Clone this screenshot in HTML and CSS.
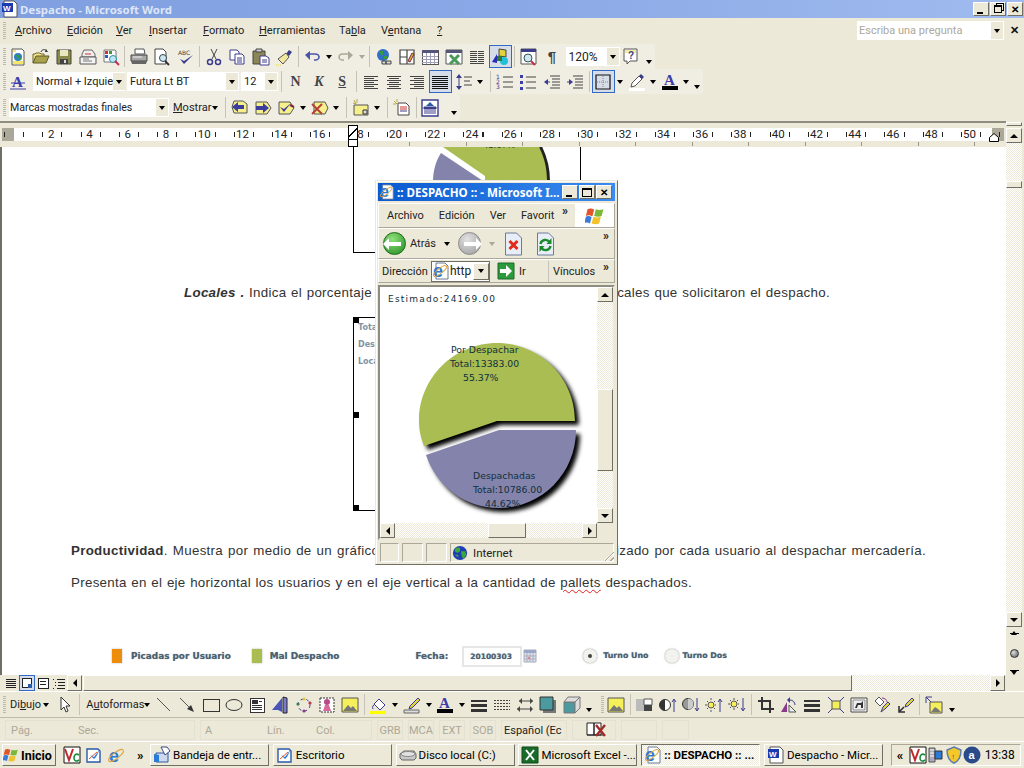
FILE: index.html
```html
<!DOCTYPE html>
<html lang="es">

<head>
    <meta charset="UTF-8">
    <title>Despacho - Microsoft Word</title>
    <link rel="stylesheet" href="styles.css">
</head>

<body>
    <svg class="defs" xmlns="http://www.w3.org/2000/svg">
        <symbol id="new" viewBox="0 0 18 18"><path d="M3 1h10l2 2v14H3z" fill="#fff" stroke="#555"/><path d="M4 2h3v2H4zM4 13h10v3H4z" fill="#f2e96a"/><circle cx="9" cy="9" r="4" fill="#2f7fc4"/><path d="M7 7h3v3H8zM10 10h2v2h-2z" fill="#3a9a3a"/></symbol>
        <symbol id="open" viewBox="0 0 18 18"><path d="M1 15V6h2l1-1h4l1 1h3v2" fill="#f4e48c" stroke="#6b6630"/><path d="M1 15l3-7h13l-3 7z" fill="#a8a24e" stroke="#5c5826"/><path d="M9 4c1-3 4-3 6-1" fill="none" stroke="#333"/><path d="M14 1l2 3h-3z" fill="#333"/></symbol>
        <symbol id="save" viewBox="0 0 18 18"><path d="M2 2h14v14H2z" fill="#8a8a4a" stroke="#444"/><path d="M5 2h8v6H5z" fill="#e9e7c2"/><path d="M5 11h8v5H5z" fill="#444"/><path d="M9 12h2v3H9z" fill="#ddd"/></symbol>
        <symbol id="mail" viewBox="0 0 18 18"><path d="M5 2h8l3 4v3H3V6z" fill="#eee" stroke="#666"/><path d="M6 6h6" stroke="#c33"/><path d="M1 9h16v7H1z" fill="#f3f3f3" stroke="#555"/><path d="M4 11h6M4 13h9" stroke="#777"/></symbol>
        <symbol id="perm" viewBox="0 0 18 18"><path d="M2 2h11l1 1v11H2z" fill="#fff" stroke="#777"/><path d="M3 3h3v3H3z" fill="#c33"/><path d="M7 3h3v3H7z" fill="#3a9a3a"/><path d="M3 7h3v3H3z" fill="#2f5fc4"/><circle cx="11" cy="11" r="3.5" fill="#bfe6f5" stroke="#2f8fa0"/><path d="M13 13l4 4" stroke="#c0304a" stroke-width="2"/></symbol>
        <symbol id="print" viewBox="0 0 18 18"><path d="M5 1h9l1 5H5z" fill="#fff" stroke="#555"/><path d="M1 7h16v6H1z" fill="#a8a8a8" stroke="#444"/><path d="M1 13h16l-1 3H2z" fill="#666"/><path d="M3 9h9" stroke="#eee"/></symbol>
        <symbol id="preview" viewBox="0 0 18 18"><path d="M2 1h8l3 3v12H2z" fill="#fff" stroke="#444"/><circle cx="10" cy="10" r="3.5" fill="#cfe6ee" stroke="#345"/><path d="M12 13l4 4" stroke="#333" stroke-width="2"/></symbol>
        <symbol id="spell" viewBox="0 0 18 18"><text x="1" y="7" class="tiny">ABC</text><path d="M3 11l4 5 9-9-9 6z" fill="#3c3c8c"/></symbol>
        <symbol id="cut" viewBox="0 0 18 18"><path d="M6 1l5 10M12 1L7 11" stroke="#444" fill="none"/><circle cx="5" cy="14" r="2.5" fill="none" stroke="#3c3c8c" stroke-width="1.5"/><circle cx="13" cy="14" r="2.5" fill="none" stroke="#3c3c8c" stroke-width="1.5"/></symbol>
        <symbol id="copy" viewBox="0 0 18 18"><path d="M2 2h7l2 2v8H2z" fill="#fff" stroke="#3c3c8c"/><path d="M7 6h7l2 2v8H7z" fill="#fff" stroke="#3c3c8c"/><path d="M9 10h5M9 12h5M9 14h5" stroke="#3c3c8c"/></symbol>
        <symbol id="paste" viewBox="0 0 18 18"><path d="M1 3h12v13H1z" fill="#8c8656" stroke="#444"/><path d="M4 1h6v3H4z" fill="#ccc" stroke="#444"/><path d="M8 8h6l3 2v7H8z" fill="#fff" stroke="#3c3c8c"/><path d="M10 12h5M10 14h5" stroke="#3c3c8c"/></symbol>
        <symbol id="brush" viewBox="0 0 18 18"><path d="M11 6l3-4 3 2-3 4z" fill="#3c3c8c"/><path d="M3 11l8-6 3 4-6 7z" fill="#f2e9a0" stroke="#555"/><path d="M1 17h6" stroke="#e8d93c" stroke-dasharray="1 1"/></symbol>
        <symbol id="undo" viewBox="0 0 18 18"><path d="M5 6h7c3 0 4 2 4 3s-1 3-3 3h-2" fill="none" stroke="#4a55a8" stroke-width="1.6"/><path d="M2 7l5-4v9z" fill="#4a55a8"/></symbol>
        <symbol id="redo" viewBox="0 0 18 18"><path d="M13 6H6C3 6 2 8 2 9s1 3 3 3h2" fill="none" stroke="#aca899" stroke-width="1.6"/><path d="M16 7l-5-4v9z" fill="#aca899"/></symbol>
        <symbol id="link" viewBox="0 0 18 18"><circle cx="8" cy="7" r="6" fill="#2f6fc4"/><path d="M4 3h4v4H6zM9 8h3v3H9z" fill="#3a9a3a"/><path d="M7 13h4v3H7zM11 13h5v3h-5z" fill="#ddd" stroke="#444"/></symbol>
        <symbol id="draw" viewBox="0 0 18 18"><path d="M2 2h14v14H2zM9 2v14M2 9h7" fill="#fff" stroke="#444" stroke-width="1.2"/><path d="M10 13l4-8 2 1-4 8z" fill="#e2b23c" stroke="#7a2a3a"/></symbol>
        <symbol id="table" viewBox="0 0 18 18" shape-rendering="crispEdges"><path d="M1 2h16v14H1z" fill="#fff" stroke="#555"/><path d="M1 2h16v3H1z" fill="#55557a"/><path d="M1 8h16M1 11h16M1 14h16M5 5v11M9 5v11M13 5v11" stroke="#a0a0b8"/></symbol>
        <symbol id="excel" viewBox="0 0 18 18"><path d="M1 2h16v14H1z" fill="#fff" stroke="#555"/><path d="M1 2h16v3H1z" fill="#55557a"/><path d="M5 7l9 9M14 7l-9 9" stroke="#4a9a5a" stroke-width="3"/></symbol>
        <symbol id="cols" viewBox="0 0 18 18" shape-rendering="crispEdges"><path d="M2 3h14M2 5h14M2 7h14M2 9h14M2 11h14M2 13h14M2 15h14" stroke="#444"/><path d="M9 3v12" stroke="#ece9d8"/></symbol>
        <symbol id="drawing" viewBox="0 0 18 18"><path d="M8 1l7 1v7l-7-1z" fill="#e2d23c" stroke="#444"/><path d="M1 14l5-8v9z" fill="#2a2ab8"/><circle cx="13" cy="13" r="4" fill="#20c0d8"/><path d="M6 8h5v5H6z" fill="#2a7a3a"/></symbol>
        <symbol id="docmap" viewBox="0 0 18 18"><path d="M1 1h15v15H1z" fill="#fff" stroke="#555"/><path d="M1 1h15v3H1z" fill="#3c3c8c"/><circle cx="8" cy="10" r="4" fill="#cfe6ee" stroke="#355"/><path d="M11 13l4 4" stroke="#c0304a" stroke-width="2"/></symbol>
        <symbol id="help" viewBox="0 0 18 18"><path d="M2 1h13v12H8l-3 3v-3H2z" fill="#fff" stroke="#555"/><path d="M3 2h11v3H3z" fill="#f2ec9c"/><text x="6" y="11" class="qmark">?</text></symbol>
        <symbol id="style" viewBox="0 0 18 18"><text x="2" y="14" class="bigA">A</text><path d="M1 10h14M0 16h16" stroke="#3c3caa"/></symbol>
        <symbol id="al" viewBox="0 0 18 18" shape-rendering="crispEdges"><path d="M2 3h14M2 5h10M2 7h14M2 9h10M2 11h14M2 13h10M2 15h14" stroke="#444"/></symbol>
        <symbol id="ac" viewBox="0 0 18 18" shape-rendering="crispEdges"><path d="M2 3h14M4 5h10M2 7h14M4 9h10M2 11h14M4 13h10M2 15h14" stroke="#444"/></symbol>
        <symbol id="ar" viewBox="0 0 18 18" shape-rendering="crispEdges"><path d="M2 3h14M6 5h10M2 7h14M6 9h10M2 11h14M6 13h10M2 15h14" stroke="#444"/></symbol>
        <symbol id="aj" viewBox="0 0 18 18" shape-rendering="crispEdges"><path d="M1 3h16M1 5h16M1 7h16M1 9h16M1 11h16M1 13h16M1 15h16" stroke="#111"/></symbol>
        <symbol id="spacing" viewBox="0 0 18 18"><path d="M9 4h8M9 8h6M9 12h8" stroke="#444"/><path d="M4 3v11" stroke="#3c3c8c"/><path d="M1 5l3-4 3 4zM1 13l3 4 3-4z" fill="#3c3c8c"/></symbol>
        <symbol id="num" viewBox="0 0 18 18"><text x="0" y="6" class="tiny blue">1</text><text x="0" y="11" class="tiny blue">2</text><text x="0" y="16" class="tiny blue">3</text><path d="M7 4h10M7 9h10M7 14h10" stroke="#444"/></symbol>
        <symbol id="bul" viewBox="0 0 18 18"><path d="M1 2h3v3H1zM1 8h3v3H1zM1 14h3v3H1z" fill="#3c3caa"/><path d="M7 4h10M7 9h10M7 15h10" stroke="#444"/></symbol>
        <symbol id="outd" viewBox="0 0 18 18"><path d="M7 3h10M9 6h8M9 9h8M9 12h8M7 15h10" stroke="#444"/><path d="M1 9l4-3v6z" fill="#3c3c8c"/><path d="M4 9h3" stroke="#3c3c8c"/></symbol>
        <symbol id="ind" viewBox="0 0 18 18"><path d="M7 3h10M9 6h8M9 9h8M9 12h8M7 15h10" stroke="#444"/><path d="M7 9L3 6v6z" fill="#3c3c8c"/><path d="M1 9h3" stroke="#3c3c8c"/></symbol>
        <symbol id="border" viewBox="0 0 18 18"><path d="M2 2h14v14H2z" fill="none" stroke="#111" stroke-width="1.2"/><path d="M9 3v12M3 9h12" stroke="#888" stroke-dasharray="1 1"/></symbol>
        <symbol id="hilite" viewBox="0 0 18 18"><path d="M4 10l7-7 3 3-7 7-4 1z" fill="#fff" stroke="#555"/><path d="M11 3l3 3 2-2-3-3z" fill="#3c3c8c"/><path d="M1 15h16v3H1z" fill="#fff"/></symbol>
        <symbol id="fcolor" viewBox="0 0 18 18"><text x="3" y="12" class="bigA">A</text><path d="M1 13h16v4H1z" fill="#000"/></symbol>
        <symbol id="prev" viewBox="0 0 18 18"><path d="M3 2h9l4 3v9H3l-2-6z" fill="#f5ef8c" stroke="#555"/><path d="M1 8l6-5v3h6v4H7v3z" fill="#3c3c9c"/></symbol>
        <symbol id="next" viewBox="0 0 18 18"><path d="M2 3h11l4 6-4 6H2z" fill="#f5ef8c" stroke="#555"/><path d="M15 9L9 4v3H2v4h7v3z" fill="#3c3c9c"/></symbol>
        <symbol id="acc" viewBox="0 0 18 18"><path d="M2 3h11l4 6-4 6H2z" fill="#f5ef8c" stroke="#555"/><path d="M3 8l4 5 7-9-7 6z" fill="#3c3c9c"/><path d="M13 6l4 2" stroke="#7a2a3a" stroke-width="2"/></symbol>
        <symbol id="rej" viewBox="0 0 18 18"><path d="M3 3h11l3 6-3 6H3z" fill="#f5ef8c" stroke="#555"/><path d="M1 5l10 10M11 5L1 15" stroke="#b83a3a" stroke-width="1.8"/></symbol>
        <symbol id="comment" viewBox="0 0 18 18"><path d="M2 6h14v10H2z" fill="#f5ef8c" stroke="#555"/><path d="M2 1l2 4M5 0v4M1 4l3 1" stroke="#b8a83c"/><path d="M11 11h4v4h-4z" fill="#ddd" stroke="#333"/></symbol>
        <symbol id="review" viewBox="0 0 18 18"><path d="M5 4h8l3 3v9H5z" fill="#fff" stroke="#444"/><path d="M7 8h7M7 10h7" stroke="#c33"/><path d="M7 12h7" stroke="#3c3c8c"/><path d="M1 2l3 3M4 0v3M0 5h3" stroke="#b8a83c"/></symbol>
        <symbol id="pane" viewBox="0 0 18 18"><path d="M1 1h16v16H1z" fill="#fff" stroke="#3c3c8c" stroke-width="1.4"/><path d="M9 3l4 4H5z" fill="#2a5aa8"/><path d="M3 8h12v2H3zM3 12h12M3 14h12" fill="#3c3c8c" stroke="#3c3c8c"/></symbol>
        <symbol id="vnormal" viewBox="0 0 14 14" shape-rendering="crispEdges"><path d="M2 3h10M2 5h10M2 7h10M2 9h10M2 11h10" stroke="#222"/></symbol>
        <symbol id="vweb" viewBox="0 0 14 14" shape-rendering="crispEdges"><path d="M2 2h9v9H2z" fill="#fff" stroke="#222"/><circle cx="10" cy="10" r="2.5" fill="#2a5aa8"/></symbol>
        <symbol id="vprint" viewBox="0 0 14 14" shape-rendering="crispEdges"><path d="M2 2h10v10H2z" fill="#fff" stroke="#222"/><path d="M4 5h6M4 8h6" stroke="#222"/></symbol>
        <symbol id="voutline" viewBox="0 0 14 14" shape-rendering="crispEdges"><path d="M1 3h1M5 3h8M3 6h1M6 6h7M3 9h1M6 9h7M1 12h1M5 12h8" stroke="#222"/></symbol>
        <symbol id="cursor" viewBox="0 0 18 18"><path d="M4 1v13l3-3 2 5 2-1-2-5h4z" fill="#fff" stroke="#333"/></symbol>
        <symbol id="line" viewBox="0 0 18 18"><path d="M2 2l13 13" stroke="#555"/></symbol>
        <symbol id="arrow" viewBox="0 0 18 18"><path d="M2 2l13 13" stroke="#555"/><path d="M16 16l-7-3 4-4z" fill="#333"/></symbol>
        <symbol id="rect" viewBox="0 0 18 18" shape-rendering="crispEdges"><path d="M1 3h16v12H1z" fill="#ece9d8" stroke="#333"/></symbol>
        <symbol id="oval" viewBox="0 0 18 18"><ellipse cx="9" cy="9" rx="8" ry="5.5" fill="#ece9d8" stroke="#333"/></symbol>
        <symbol id="tbox" viewBox="0 0 18 18" shape-rendering="crispEdges"><path d="M2 2h14v14H2z" fill="#fff" stroke="#333"/><path d="M4 4h5v3H4zM11 5h3M4 9h10M4 11h10M4 13h10" fill="#333" stroke="#333"/></symbol>
        <symbol id="wordart" viewBox="0 0 18 18"><path d="M1 14l10-12v14l-4-2z" fill="#4a55b8"/><path d="M12 1l4 1v15h-4z" fill="#7c7cc8" stroke="#223"/></symbol>
        <symbol id="diagram" viewBox="0 0 18 18"><circle cx="9" cy="9" r="6" fill="none" stroke="#3c3c8c" stroke-dasharray="3 3"/><circle cx="9" cy="3" r="1.6" fill="#d8c83c"/><circle cx="15" cy="7" r="1.6" fill="#b83a4a"/><circle cx="9" cy="15" r="1.6" fill="#8a3a8a"/><circle cx="3" cy="8" r="1.6" fill="#3a7a5a"/></symbol>
        <symbol id="clip" viewBox="0 0 18 18"><path d="M2 2h14v14H2z" fill="#fff" stroke="#333" stroke-dasharray="2 1"/><circle cx="9" cy="6" r="3" fill="#b84a8a"/><path d="M5 15l2-6h4l2 6z" fill="#d86a9a"/></symbol>
        <symbol id="pic" viewBox="0 0 18 18"><path d="M1 2h16v14H1z" fill="#f5ef5c" stroke="#555"/><path d="M2 15l5-6 3 3 2-2 4 5z" fill="#777"/></symbol>
        <symbol id="fill" viewBox="0 0 18 18"><path d="M4 8l5-5 6 6-5 5z" fill="#fff" stroke="#3c3c8c"/><path d="M3 13c-1-2 0-4 2-5" stroke="#3c3c8c" fill="none"/><path d="M0 15h16v3H0z" fill="#ff0"/></symbol>
        <symbol id="lcolor" viewBox="0 0 18 18"><path d="M7 10l8-8 2 2-8 8-3 1z" fill="#e2d23c" stroke="#3c3c8c"/><path d="M1 14h15v3H1z" fill="#ddd" stroke="#666"/></symbol>
        <symbol id="lstyle" viewBox="0 0 18 18" shape-rendering="crispEdges"><path d="M1 4h16v2H1zM1 8h16v3H1zM1 13h16v3H1z" fill="#333"/></symbol>
        <symbol id="dash" viewBox="0 0 18 18" shape-rendering="crispEdges"><path d="M1 4h16M1 7h16M1 10h16M1 13h16" stroke="#444" stroke-dasharray="2 1"/></symbol>
        <symbol id="arrows" viewBox="0 0 18 18"><path d="M3 5h14M1 13h14" stroke="#444"/><path d="M3 5l3-3v6zM17 13l-3-3v6zM17 5l-3-3v6zM1 13l3-3v6z" fill="#444"/></symbol>
        <symbol id="shadow" viewBox="0 0 18 18"><path d="M4 4h13v13H4z" fill="#777"/><path d="M1 1h13v13H1z" fill="#4a9aa0" stroke="#333"/></symbol>
        <symbol id="cube" viewBox="0 0 18 18"><path d="M1 6h11v11H1z" fill="#4a9aa0" stroke="#777"/><path d="M1 6l4-5h12l-5 5zM12 6l5-5v11l-5 5z" fill="#ddd" stroke="#777"/></symbol>
        <symbol id="contrast" viewBox="0 0 18 18"><path d="M1 3h8v12H1z" fill="#bbb"/><path d="M9 3h8v6H9z" fill="#fff" stroke="#555"/><path d="M9 9h8v6H9z" fill="#444"/></symbol>
        <symbol id="cup" viewBox="0 0 18 18"><circle cx="6" cy="9" r="5.5" fill="#fff" stroke="#333"/><path d="M6 3.5a5.5 5.5 0 0 0 0 11z" fill="#333"/><path d="M15 16V4M13 6l2-3 2 3" stroke="#3c3c8c" fill="none"/></symbol>
        <symbol id="cdown" viewBox="0 0 18 18"><circle cx="6" cy="8" r="5.5" fill="#999" stroke="#333"/><path d="M6 2.500a5.500 5.500 0 0 1 0 11z" fill="#ccc"/><path d="M15 2v12M13 12l2 3 2-3" stroke="#3c3c8c" fill="none"/></symbol>
        <symbol id="bup" viewBox="0 0 18 18"><circle cx="6" cy="9" r="3" fill="#f5ef5c" stroke="#555"/><path d="M6 2v2M6 14v2M0 9h2M10 9h1M2 5l1 1M2 13l1-1M10 5L9 6M10 13l-1-1" stroke="#555"/><path d="M15 16V4M13 6l2-3 2 3" stroke="#3c3c8c" fill="none"/></symbol>
        <symbol id="bdown" viewBox="0 0 18 18"><circle cx="6" cy="8" r="3" fill="#f5ef5c" stroke="#555"/><path d="M6 2v2M6 12v2M0 8h2M10 8h1M2 4l1 1M2 12l1-1M10 4L9 5M10 12l-1-1" stroke="#555"/><path d="M15 2v12M13 12l2 3 2-3" stroke="#3c3c8c" fill="none"/></symbol>
        <symbol id="crop" viewBox="0 0 18 18"><path d="M5 1v12h12M1 5h12v12" fill="none" stroke="#333" stroke-width="2"/></symbol>
        <symbol id="rotate" viewBox="0 0 18 18"><path d="M1 16l6-10v10z" fill="#8a3a8a"/><path d="M9 16l0-7 7 7z" fill="#eee" stroke="#555"/><path d="M10 4a5 5 0 0 1 5 5" fill="none" stroke="#3c3c8c"/><path d="M10 1v6l-3-3z" fill="#3c3c8c"/></symbol>
        <symbol id="compress" viewBox="0 0 18 18"><path d="M5 5h8v8H5z" fill="#f5ef5c" stroke="#555"/><path d="M1 1l4 4M17 1l-4 4M1 17l4-4M17 17l-4-4" stroke="#3c3c8c"/></symbol>
        <symbol id="fpic" viewBox="0 0 18 18"><path d="M1 2h16v14H1z" fill="#fff" stroke="#444"/><path d="M3 4h12v10H3z" fill="#eee" stroke="#888"/><path d="M5 12l2-5h4l2-2v7h-2V9H8l-1 3z" fill="#333"/></symbol>
        <symbol id="transp" viewBox="0 0 18 18"><path d="M2 5l4-4 5 5-4 4z" fill="#fff" stroke="#555"/><path d="M9 2c3 0 5 2 5 4" fill="none" stroke="#8a3a8a"/><path d="M8 16l2-5 5-5 2 2-5 5z" fill="#e2d23c" stroke="#3c3c8c"/></symbol>
        <symbol id="reset" viewBox="0 0 18 18"><path d="M9 8l6-6 2 2-6 6-3 1z" fill="#e2d23c" stroke="#3c3c8c"/><path d="M2 10v6h6M2 16l5-5" stroke="#333" fill="none" stroke-width="1.6"/></symbol>
        <symbol id="wrap" viewBox="0 0 18 18"><path d="M5 6h12v11H5z" fill="#f5ef5c" stroke="#555"/><path d="M6 16l4-5 3 2 3 3z" fill="#777"/><path d="M1 1h6M1 1v6M1 1l5 5" stroke="#3c3c8c"/></symbol>
        <symbol id="ie" viewBox="0 0 18 18"><text x="2" y="16" class="ie-e">e</text><ellipse cx="9" cy="9.500" rx="9" ry="3" transform="rotate(-38 9 9.500)" fill="none" stroke="#e2a23c"/></symbol>
        <symbol id="iepage" viewBox="0 0 18 18"><path d="M4 1h9l3 3v13H4z" fill="#fff" stroke="#6a7a9a"/><text x="1" y="15" class="ie-e">e</text><ellipse cx="8" cy="9" rx="8" ry="2.500" transform="rotate(-38 8 9)" fill="none" stroke="#e2a23c"/></symbol>
        <symbol id="globe" viewBox="0 0 18 18"><circle cx="9" cy="9" r="8" fill="#1f3fb0"/><path d="M4 3h5v4l-3 2-3-2zM10 7h5l1 4-3 5-2-3zM3 11h4v3z" fill="#3aa83a"/></symbol>
        <symbol id="go" viewBox="0 0 18 18"><path d="M1 1h16v16H1z" fill="#2a9a3a" stroke="#1a6a2a"/><path d="M3 7h6V3l6 6-6 6v-4H3z" fill="#fff"/></symbol>
        <symbol id="stop" viewBox="0 0 18 24"><path d="M1 1h11l5 5v17H1z" fill="#e8eef8" stroke="#6a7a9a"/><path d="M5 9l8 8M13 9l-8 8" stroke="#e02a1a" stroke-width="3"/></symbol>
        <symbol id="refresh" viewBox="0 0 18 24"><path d="M1 1h11l5 5v17H1z" fill="#e8eef8" stroke="#6a7a9a"/><path d="M4 12a5 5 0 0 1 9-2M14 14a5 5 0 0 1-9 2" fill="none" stroke="#1a8a2a" stroke-width="2.4"/><path d="M15 6v6h-5zM3 20v-6h5z" fill="#1a8a2a"/></symbol>
        <symbol id="flag" viewBox="0 0 24 24"><path d="M3 4c4-2 5 0 8 0l-2 8c-3 0-4-2-8 0z" fill="#e2552a"/><path d="M13 4c3 1 5 1 9 0l-2 8c-3 1-6 1-9 0z" fill="#7ab83a"/><path d="M1 13c3-2 5 0 7 0l-2 8c-3-1-4-2-7 0z" fill="#3a7ad8"/><path d="M10 13c3 1 6 1 9 0l-2 8c-3 1-6 1-9 0z" fill="#f2c22a"/></symbol>
        <symbol id="vc" viewBox="0 0 18 18"><path d="M1 1h16v16H1z" fill="#fff" stroke="#111"/><path d="M2 3l4 11 4-11" fill="none" stroke="#c02a2a" stroke-width="2"/><path d="M16 9c-3-2-5 0-5 3s2 4 5 2" fill="none" stroke="#1a8a3a" stroke-width="1.6"/></symbol>
        <symbol id="desk" viewBox="0 0 18 18"><path d="M2 3h11l2 2v11H2z" fill="#fff" stroke="#2a5aa8" stroke-width="1.4"/><path d="M5 9l4 2 6-8-4 8-2 2z" fill="#2a7ad8"/><path d="M4 13l8-7" stroke="#e2552a"/></symbol>
        <symbol id="inbox" viewBox="0 0 18 18"><path d="M3 7h12v9H3z" fill="#cfd8ee" stroke="#2a5aa8"/><path d="M8 1h6l3 4-5 4z" fill="#fff" stroke="#3a4a8a"/><path d="M1 8l5 1v7H1z" fill="#2a7ad8"/></symbol>
        <symbol id="disk" viewBox="0 0 18 18"><path d="M1 8l4-3h10l2 3v4l-2 2H3l-2-2z" fill="#c8c8c8" stroke="#666"/><ellipse cx="9" cy="8" rx="7" ry="2.500" fill="#e2e2e2" stroke="#888"/></symbol>
        <symbol id="xls" viewBox="0 0 18 18"><path d="M1 1h16v16H1z" fill="#1a6a2a" stroke="#0a4a1a"/><path d="M5 4l8 10M13 4L5 14" stroke="#fff" stroke-width="2"/></symbol>
        <symbol id="doc" viewBox="0 0 18 18"><path d="M3 1h10l3 3v13H3z" fill="#fff" stroke="#555"/><path d="M1 3h11v9H1z" fill="#1a3ab0"/><text x="2" y="10.500" class="wmark">W</text></symbol>
        <symbol id="tape" viewBox="0 0 18 18"><path d="M2 2h6v14H2z" fill="#aab" stroke="#555"/><path d="M8 5h7v8H8z" fill="#2a7ad8" stroke="#333"/><path d="M3 4h4M3 7h4M3 10h4" stroke="#fff"/></symbol>
        <symbol id="shield" viewBox="0 0 18 18"><path d="M9 1l7 3c0 7-2 11-7 13C4 15 2 11 2 4z" fill="#f2c82a" stroke="#5a7ab0" stroke-width="1.4"/><text x="7" y="13" class="tiny">!</text></symbol>
        <symbol id="avg" viewBox="0 0 18 18"><circle cx="9" cy="9" r="8.500" fill="#2a4a8a"/><text x="5.500" y="13" class="wA">a</text></symbol>
        <symbol id="book" viewBox="0 0 24 18"><path d="M2 2h7v12H2zM9 2h7v12H9z" fill="#fff" stroke="#222"/><path d="M2 14h18" stroke="#222"/><path d="M11 4l9 11M20 4l-9 11" stroke="#a02a2a" stroke-width="2.4"/></symbol>
        <symbol id="calendar" viewBox="0 0 14 14"><path d="M1 1h12v12H1z" fill="#dfe4ee" stroke="#aab"/><path d="M1 1h12v3H1z" fill="#9aa8c8"/><path d="M4 4v9M7 4v9M10 4v9M1 7h12M1 10h12" stroke="#aab"/><path d="M5 8h2v2H5z" fill="#d88"/></symbol>
    </svg>

    <div class="screen">
        <div class="titlebar">
            <svg class="i tb-icon"><use href="#doc" /></svg>
            <span class="title-text">Despacho - Microsoft Word</span>
            <span class="win-btn min"><b></b></span>
            <span class="win-btn rest"><b></b></span>
            <span class="win-btn close">✕</span>
        </div>

        <div class="menubar">
            <i class="grip"></i>
            <span class="m m1"><u>A</u>rchivo</span>
            <span class="m m2"><u>E</u>dición</span>
            <span class="m m3"><u>V</u>er</span>
            <span class="m m4"><u>I</u>nsertar</span>
            <span class="m m5"><u>F</u>ormato</span>
            <span class="m m6"><u>H</u>erramientas</span>
            <span class="m m7">Ta<u>b</u>la</span>
            <span class="m m8">V<u>e</u>ntana</span>
            <span class="m m9"><u>?</u></span>
            <span class="ask">Escriba una pregunta<i class="drop"></i></span>
            <span class="ask-x">✕</span>
        </div>

        <div class="toolbar tb1">
            <i class="grip"></i>
            <span class="ic"><svg class="i"><use href="#new" /></svg></span>
            <span class="ic"><svg class="i"><use href="#open" /></svg></span>
            <span class="ic"><svg class="i"><use href="#save" /></svg></span>
            <span class="ic"><svg class="i"><use href="#mail" /></svg></span>
            <span class="ic"><svg class="i"><use href="#perm" /></svg></span>
            <i class="sep"></i>
            <span class="ic"><svg class="i"><use href="#print" /></svg></span>
            <span class="ic"><svg class="i"><use href="#preview" /></svg></span>
            <span class="ic"><svg class="i"><use href="#spell" /></svg></span>
            <i class="sep"></i>
            <span class="ic"><svg class="i"><use href="#cut" /></svg></span>
            <span class="ic"><svg class="i"><use href="#copy" /></svg></span>
            <span class="ic"><svg class="i"><use href="#paste" /></svg></span>
            <span class="ic"><svg class="i"><use href="#brush" /></svg></span>
            <i class="sep"></i>
            <span class="ic"><svg class="i"><use href="#undo" /></svg></span>
            <span class="dd"><i class="tri"></i></span>
            <span class="ic"><svg class="i"><use href="#redo" /></svg></span>
            <span class="dd"><i class="tri off"></i></span>
            <i class="sep"></i>
            <span class="ic"><svg class="i"><use href="#link" /></svg></span>
            <span class="ic"><svg class="i"><use href="#draw" /></svg></span>
            <span class="ic"><svg class="i"><use href="#table" /></svg></span>
            <span class="ic"><svg class="i"><use href="#excel" /></svg></span>
            <span class="ic"><svg class="i"><use href="#cols" /></svg></span>
            <span class="ic on"><svg class="i"><use href="#drawing" /></svg></span>
            <i class="sep"></i>
            <span class="ic"><svg class="i"><use href="#docmap" /></svg></span>
            <span class="ic glyph">¶</span>
            <span class="combo zoom">120%<i class="drop"></i></span>
            <span class="ic"><svg class="i"><use href="#help" /></svg></span>
            <span class="chev"></span>
        </div>

        <div class="toolbar tb2">
            <i class="grip"></i>
            <span class="ic style-ic"><svg class="i"><use href="#style" /></svg></span>
            <span class="combo c-style">Normal + Izquie<i class="drop"></i></span>
            <span class="combo c-font">Futura Lt BT<i class="drop"></i></span>
            <span class="combo c-size">12<i class="drop"></i></span>
            <i class="sep sep-b"></i>
            <span class="ic fmt fb">N</span>
            <span class="ic fmt fi">K</span>
            <span class="ic fmt fu">S</span>
            <i class="sep"></i>
            <span class="ic"><svg class="i"><use href="#al" /></svg></span>
            <span class="ic"><svg class="i"><use href="#ac" /></svg></span>
            <span class="ic"><svg class="i"><use href="#ar" /></svg></span>
            <span class="ic on"><svg class="i"><use href="#aj" /></svg></span>
            <span class="ic"><svg class="i"><use href="#spacing" /></svg></span>
            <span class="dd"><i class="tri"></i></span>
            <i class="sep sep-w"></i>
            <span class="ic"><svg class="i"><use href="#num" /></svg></span>
            <span class="ic"><svg class="i"><use href="#bul" /></svg></span>
            <span class="ic"><svg class="i"><use href="#outd" /></svg></span>
            <span class="ic"><svg class="i"><use href="#ind" /></svg></span>
            <i class="sep"></i>
            <span class="ic on"><svg class="i"><use href="#border" /></svg></span>
            <span class="dd"><i class="tri"></i></span>
            <span class="ic"><svg class="i"><use href="#hilite" /></svg></span>
            <span class="dd"><i class="tri"></i></span>
            <span class="ic"><svg class="i"><use href="#fcolor" /></svg></span>
            <span class="dd"><i class="tri"></i></span>
            <span class="chev"></span>
        </div>

        <div class="toolbar tb3">
            <i class="grip"></i>
            <span class="combo c-markup">Marcas mostradas finales<i class="drop"></i></span>
            <span class="txt-btn t-mostrar"><u>M</u>ostrar</span>
            <span class="dd"><i class="tri"></i></span>
            <i class="sep sep-w"></i>
            <span class="ic"><svg class="i"><use href="#prev" /></svg></span>
            <span class="ic"><svg class="i"><use href="#next" /></svg></span>
            <span class="ic"><svg class="i"><use href="#acc" /></svg></span>
            <span class="dd"><i class="tri"></i></span>
            <span class="ic"><svg class="i"><use href="#rej" /></svg></span>
            <span class="dd"><i class="tri"></i></span>
            <i class="sep sep-w"></i>
            <span class="ic"><svg class="i"><use href="#comment" /></svg></span>
            <span class="dd"><i class="tri"></i></span>
            <i class="sep sep-w"></i>
            <span class="ic"><svg class="i"><use href="#review" /></svg></span>
            <i class="sep"></i>
            <span class="ic"><svg class="i"><use href="#pane" /></svg></span>
            <span class="chev pane-chev"></span>
        </div>

        <div class="workarea">
            <div class="main-col">
                <div class="ruler">
                    <div class="ruler-band">
                        <div class="ruler-nums">
                            <span>2</span><span>4</span><span>6</span><span>8</span><span>10</span><span>12</span><span>14</span><span>16</span><span>18</span><span>20</span><span>22</span><span>24</span><span>26</span><span>28</span><span>30</span><span>32</span><span>34</span><span>36</span><span>38</span><span>40</span><span>42</span><span>44</span><span>46</span><span>48</span><span>50</span>
                        </div>
                    </div>
                    <div class="ruler-tabs"></div>
                    <div class="indent-mark"><i class="top"></i><i class="bot"></i></div>
                    <svg class="right-mark" viewBox="0 0 10 9"><path d="M.5 8.500v-4l4.500-4 4.500 4v4z" fill="#fff" stroke="#000" /></svg>
                </div>

                <div class="doc">
                    <div class="frame-top">
                        <svg class="pie-top" viewBox="0 0 130 34">
                            <path d="M115 34C115 20 112 10 107 0" fill="none" stroke="#222" stroke-width="4" />
                            <path d="M8 6L50 34H0C0 22 4 12 8 6z" fill="#8483ab" />
                            <path d="M10 0L52 29V34H114C114 20 111 10 106 0z" fill="#a9bd52" />
                        </svg>
                        <span class="pie-top-label">41.37%</span>
                    </div>

                    <div class="frame-mid">
                        <i class="handle h1"></i><i class="handle h2"></i><i class="handle h3"></i>
                        <span class="frame-line">Total</span>
                        <span class="frame-line">Despachado</span>
                        <span class="frame-line">Locales</span>
                    </div>

                    <p class="para para-locales"><b><em>Locales .</em></b> Indica el porcentaje de despachos para cada uno de los locales que solicitaron el despacho.</p>
                    <p class="para para-prod"><b>Productividad</b>. Muestra por medio de un gráfico de barras el trabajo que ha sido realizado por cada usuario al despachar mercadería.</p>
                    <p class="para para-eje">Presenta en el eje horizontal los usuarios y en el eje vertical a la cantidad de <span class="misspelt">pallets</span> despachados.</p>

                    <div class="legend">
                        <i class="swatch orange"></i><span class="leg-a">Picadas por Usuario</span>
                        <i class="swatch green"></i><span class="leg-b">Mal Despacho</span>
                        <span class="leg-c">Fecha:</span>
                        <span class="leg-input">20100303</span>
                        <svg class="leg-cal"><use href="#calendar" /></svg>
                        <i class="radio checked"></i><span class="leg-d">Turno Uno</span>
                        <i class="radio"></i><span class="leg-e">Turno Dos</span>
                    </div>
                </div>

                <div class="hscroll">
                    <span class="views">
                        <svg class="v"><use href="#vnormal" /></svg>
                        <svg class="v v-on"><use href="#vweb" /></svg>
                        <svg class="v"><use href="#vprint" /></svg>
                        <svg class="v"><use href="#voutline" /></svg>
                    </span>
                    <span class="sb-btn"><i class="arr left"></i></span>
                    <span class="sb-thumb"></span>
                    <span class="sb-track"></span>
                    <span class="sb-btn"><i class="arr right"></i></span>
                </div>
            </div>

            <div class="vscroll">
                <span class="splitter"></span>
                <span class="sb-btn v-btn"><i class="arr up"></i></span>
                <span class="sb-track short"></span>
                <span class="sb-thumb v-thumb"></span>
                <span class="sb-track"></span>
                <span class="sb-btn v-btn"><i class="arr down"></i></span>
                <span class="browse">
                    <i class="dbl up"></i>
                    <i class="ball"></i>
                    <i class="dbl down"></i>
                </span>
            </div>
        </div>

        <div class="toolbar drawbar">
            <i class="grip"></i>
            <span class="txt-btn t-dibujo">Di<u>b</u>ujo</span>
            <span class="dd"><i class="tri"></i></span>
            <span class="ic cursor-ic"><svg class="i"><use href="#cursor" /></svg></span>
            <i class="sep"></i>
            <span class="txt-btn t-auto">A<u>u</u>toformas</span>
            <span class="dd"><i class="tri"></i></span>
            <span class="ic"><svg class="i"><use href="#line" /></svg></span>
            <span class="ic"><svg class="i"><use href="#arrow" /></svg></span>
            <span class="ic"><svg class="i"><use href="#rect" /></svg></span>
            <span class="ic"><svg class="i"><use href="#oval" /></svg></span>
            <span class="ic"><svg class="i"><use href="#tbox" /></svg></span>
            <span class="ic"><svg class="i"><use href="#wordart" /></svg></span>
            <span class="ic"><svg class="i"><use href="#diagram" /></svg></span>
            <span class="ic"><svg class="i"><use href="#clip" /></svg></span>
            <span class="ic"><svg class="i"><use href="#pic" /></svg></span>
            <i class="sep"></i>
            <span class="ic"><svg class="i"><use href="#fill" /></svg></span>
            <span class="dd"><i class="tri"></i></span>
            <span class="ic"><svg class="i"><use href="#lcolor" /></svg></span>
            <span class="dd"><i class="tri"></i></span>
            <span class="ic"><svg class="i"><use href="#fcolor" /></svg></span>
            <span class="dd"><i class="tri"></i></span>
            <span class="ic"><svg class="i"><use href="#lstyle" /></svg></span>
            <span class="ic"><svg class="i"><use href="#dash" /></svg></span>
            <span class="ic"><svg class="i"><use href="#arrows" /></svg></span>
            <span class="ic"><svg class="i"><use href="#shadow" /></svg></span>
            <span class="ic"><svg class="i"><use href="#cube" /></svg></span>
            <span class="chev draw-chev"></span>
            <i class="grip g2"></i>
            <span class="ic"><svg class="i"><use href="#pic" /></svg></span>
            <i class="sep"></i>
            <span class="ic"><svg class="i"><use href="#contrast" /></svg></span>
            <span class="ic"><svg class="i"><use href="#cup" /></svg></span>
            <span class="ic"><svg class="i"><use href="#cdown" /></svg></span>
            <span class="ic"><svg class="i"><use href="#bup" /></svg></span>
            <span class="ic"><svg class="i"><use href="#bdown" /></svg></span>
            <i class="sep"></i>
            <span class="ic"><svg class="i"><use href="#crop" /></svg></span>
            <span class="ic"><svg class="i"><use href="#rotate" /></svg></span>
            <span class="ic"><svg class="i"><use href="#lstyle" /></svg></span>
            <span class="ic"><svg class="i"><use href="#compress" /></svg></span>
            <span class="ic"><svg class="i"><use href="#fpic" /></svg></span>
            <span class="ic"><svg class="i"><use href="#transp" /></svg></span>
            <span class="ic"><svg class="i"><use href="#reset" /></svg></span>
            <i class="sep"></i>
            <span class="ic"><svg class="i"><use href="#wrap" /></svg></span>
            <span class="chev"></span>
        </div>

        <div class="statusbar">
            <span class="st st1"><span class="s-pag">Pág.</span><span>Sec.</span></span>
            <span class="st st2"><span class="s-a">A</span><span class="s-lin">Lín.</span><span>Col.</span></span>
            <span class="st st3">GRB</span>
            <span class="st st3">MCA</span>
            <span class="st st3">EXT</span>
            <span class="st st3">SOB</span>
            <span class="st st4">Español (Ec</span>
            <span class="st st5"><svg class="book"><use href="#book" /></svg></span>
            <span class="st st6"></span>
            <span class="st st7"></span>
        </div>

        <div class="taskbar">
            <span class="start"><svg class="i small"><use href="#flag" /></svg>Inicio</span>
            <span class="quick">
                <svg class="i"><use href="#vc" /></svg>
                <svg class="i"><use href="#desk" /></svg>
                <svg class="i"><use href="#ie" /></svg>
            </span>
            <span class="more">»</span>
            <span class="task"><svg class="i"><use href="#inbox" /></svg>Bandeja de entr...</span>
            <span class="task"><svg class="i"><use href="#desk" /></svg>Escritorio</span>
            <span class="task"><svg class="i"><use href="#disk" /></svg>Disco local (C:)</span>
            <span class="task"><svg class="i"><use href="#xls" /></svg>Microsoft Excel -...</span>
            <span class="task active"><svg class="i"><use href="#iepage" /></svg>:: DESPACHO :: ...</span>
            <span class="task"><svg class="i"><use href="#doc" /></svg>Despacho - Micr...</span>
            <span class="tray">
                <span class="more">«</span>
                <svg class="i"><use href="#vc" /></svg>
                <svg class="i"><use href="#tape" /></svg>
                <svg class="i"><use href="#shield" /></svg>
                <svg class="i"><use href="#avg" /></svg>
                <span class="clock">13:38</span>
            </span>
        </div>

        <!-- ventana flotante del navegador -->
        <div class="ie">
            <div class="ie-title">
                <svg class="i"><use href="#iepage" /></svg>
                <span class="ie-title-text">:: DESPACHO :: - Microsoft I...</span>
                <span class="win-btn min"><b></b></span>
                <span class="win-btn max"><b></b></span>
                <span class="win-btn close">✕</span>
            </div>
            <div class="ie-row ie-menu">
                <span class="ie-m">Archivo</span>
                <span class="ie-m">Edición</span>
                <span class="ie-m">Ver</span>
                <span class="ie-m">Favorit</span>
                <span class="ie-more">»</span>
                <span class="ie-logo"><svg><use href="#flag" /></svg></span>
            </div>
            <div class="ie-row ie-tools">
                <span class="round back"><i></i></span>
                <span class="ie-back-text">Atrás</span>
                <i class="tri"></i>
                <span class="round fwd"><i></i></span>
                <i class="tri off"></i>
                <svg class="ie-page"><use href="#stop" /></svg>
                <svg class="ie-page"><use href="#refresh" /></svg>
                <span class="ie-more">»</span>
            </div>
            <div class="ie-row ie-addr">
                <span class="addr-label">Dirección</span>
                <span class="addr-box"><svg class="i"><use href="#iepage" /></svg>http<span class="addr-drop"><i class="tri"></i></span></span>
                <svg class="i go"><use href="#go" /></svg>
                <span class="ir">Ir</span>
                <i class="sep"></i>
                <span>Vínculos</span>
                <span class="ie-more">»</span>
            </div>
            <div class="ie-view">
                <div class="ie-v-row">
                    <div class="ie-content">
                        <p class="estimado">Estimado:24169.00</p>
                        <svg class="pie" viewBox="0 0 200 190">
                            <g class="slice">
                                <path d="M157 78H79L6 103C2 92 1 85 1 78 1 35 36 0 79 0s78 35 78 78z" fill="#a9bd52" />
                            </g>
                            <g class="slice">
                                <path d="M158 87H81L8 112c10 30 38 53 73 53 43 0 77-35 77-78z" fill="#8483ab" />
                            </g>
                            <text class="pie-t" x="33" y="10">Por Despachar</text>
                            <text class="pie-t" x="32" y="24">Total:13383.00</text>
                            <text class="pie-t" x="45" y="38">55.37%</text>
                            <text class="pie-t" x="55" y="136">Despachadas</text>
                            <text class="pie-t" x="55" y="150">Total:10786.00</text>
                            <text class="pie-t" x="67" y="164">44.62%</text>
                        </svg>
                    </div>
                    <div class="ie-vs">
                        <span class="sb-btn v-btn"><i class="arr up"></i></span>
                        <span class="sb-track t1"></span>
                        <span class="sb-thumb t2"></span>
                        <span class="sb-track"></span>
                        <span class="sb-btn v-btn"><i class="arr down"></i></span>
                    </div>
                </div>
                <div class="ie-hs">
                    <span class="sb-btn"><i class="arr left"></i></span>
                    <span class="sb-track t3"></span>
                    <span class="sb-thumb t4"></span>
                    <span class="sb-track"></span>
                    <span class="sb-btn"><i class="arr right"></i></span>
                </div>
            </div>
            <div class="ie-status">
                <span class="cell c1"></span>
                <span class="cell c2"></span>
                <span class="cell c3"></span>
                <span class="cell zone"><svg class="i small"><use href="#globe" /></svg>Internet</span>
                <i class="resize"></i>
            </div>
        </div>
    </div>
</body>

</html>
```
FILE: styles.css
```css
* {
    box-sizing: border-box;
}

body {
    margin: 0;
    background-color: #ece9d8;
    font-family: Roboto, "Noto Sans", sans-serif;
    font-size: 11px;
    color: #222;
}

i {
    font-style: normal;
}

.defs {
    display: none;
}

.tiny {
    font: 6px "DejaVu Sans", sans-serif;
    fill: #444;
}

.tiny.blue {
    fill: #3c3c8c;
}

.qmark {
    font: bold 10px "Liberation Sans", sans-serif;
    fill: #3c3c8c;
}

.bigA {
    font: bold 15px "Liberation Serif", serif;
    fill: #3c3caa;
}

.wmark {
    font: bold 8px "Liberation Sans", sans-serif;
    fill: #fff;
}

.wA {
    font: bold 11px "Liberation Sans", sans-serif;
    fill: #fff;
}

.ie-e {
    font: bold 18px "Liberation Sans", sans-serif;
    fill: #2a7ad8;
}

.screen {
    position: relative;
    width: 1024px;
    height: 768px;
    overflow: hidden;
    display: flex;
    flex-direction: column;
}

.i {
    width: 18px;
    height: 18px;
    display: block;
    flex: none;
}

.i.small {
    width: 16px;
    height: 16px;
}

/* barra de titulo */
.titlebar {
    height: 18px;
    display: flex;
    align-items: center;
    background: linear-gradient(90deg, #7f9fe0, #8aa8e6 50%, #a0bbee);
}

.tb-icon {
    margin-left: 1px;
}

.title-text {
    margin-left: 1px;
    flex: 1;
    font-family: "Noto Sans", sans-serif;
    font-weight: bold;
    font-size: 11.4px;
    color: #dde6f8;
}

.win-btn {
    width: 16px;
    height: 14px;
    margin-right: 1px;
    display: flex;
    align-items: center;
    justify-content: center;
    position: relative;
    background-color: #ece9d8;
    border: 1px solid;
    border-color: #fff #716f64 #716f64 #fff;
    font-size: 10px;
    font-weight: bold;
    color: #000;
}

.win-btn.min b {
    width: 6px;
    height: 2px;
    margin-top: 7px;
    margin-right: 2px;
    background-color: #000;
}

.win-btn.rest b {
    width: 8px;
    height: 8px;
    border: 1px solid #000;
    border-top-width: 2px;
    box-shadow: 2px -2px 0 -1px #ece9d8, 2px -2px 0 0 #000;
}

.win-btn.max b {
    width: 10px;
    height: 9px;
    border: 1px solid #000;
    border-top-width: 2px;
}

/* menu */
.menubar {
    height: 26px;
    display: flex;
    align-items: center;
    padding-bottom: 1px;
}

.grip {
    width: 3px;
    height: 17px;
    margin-left: 3px;
    flex: none;
    background: repeating-linear-gradient(180deg, #bdbaa8 0 1px, transparent 1px 2px);
}

.m {
    flex: none;
}

.m1 { margin-left: 9px; width: 52px; }
.m2 { width: 49px; }
.m3 { width: 33px; }
.m4 { width: 54px; }
.m5 { width: 56px; }
.m6 { width: 80px; }
.m7 { width: 42px; }
.m8 { width: 56px; }

.ask {
    margin-left: auto;
    width: 147px;
    height: 19px;
    display: flex;
    align-items: center;
    justify-content: space-between;
    padding-left: 2px;
    background-color: #fff;
    color: #aca899;
}

.ask-x {
    width: 20px;
    text-align: center;
    font-size: 11px;
    font-weight: bold;
    color: #111;
}

/* barras de herramientas */
.toolbar {
    display: flex;
    align-items: center;
}

.tb1,
.tb2,
.tb3 {
    width: fit-content;
    background-color: #f0eee3;
    border-radius: 0 3px 3px 0;
}

.tb1,
.tb2 {
    height: 25px;
}

.tb3 {
    height: 27px;
}

.ic {
    width: 23.3px;
    height: 23px;
    flex: none;
    display: flex;
    align-items: center;
    justify-content: center;
}

.ic.on {
    background-color: #d6dde8;
    border: 1px solid #316ac5;
}

.glyph {
    font-family: "Liberation Sans", sans-serif;
    font-size: 15px;
    font-weight: bold;
    color: #444;
}

.fmt {
    font-family: "Liberation Serif", serif;
    font-size: 14px;
    font-weight: bold;
    color: #444;
}

.fi { font-style: italic; }
.fu { text-decoration: underline; }

.sep {
    width: 1px;
    height: 21px;
    margin: 0 2px;
    flex: none;
    background-color: #c5c2b8;
}

.sep-b { margin-left: 3px; }
.sep-w { margin-left: 5px; }

.dd {
    width: 10px;
    flex: none;
    display: flex;
    justify-content: center;
}

.tri {
    display: block;
    width: 0;
    height: 0;
    border: 3.5px solid transparent;
    border-top: 4px solid #000;
    border-bottom: 0;
}

.tri.off {
    border-top-color: #aca899;
}

.chev {
    width: 12px;
    height: 16px;
    flex: none;
    position: relative;
}

.chev::after {
    content: "";
    position: absolute;
    left: 3px;
    bottom: 1px;
    border: 3.5px solid transparent;
    border-top: 4px solid #000;
    border-bottom: 0;
}

.combo {
    height: 19px;
    flex: none;
    display: flex;
    align-items: center;
    justify-content: space-between;
    padding-left: 3px;
    background-color: #fff;
    overflow: hidden;
    white-space: nowrap;
}

.drop {
    width: 12px;
    height: 17px;
    margin-right: 1px;
    flex: none;
    display: flex;
    align-items: center;
    justify-content: center;
    background-color: #ece9d8;
}

.drop::after {
    content: "";
    border: 3px solid transparent;
    border-top: 4px solid #000;
    border-bottom: 0;
}

.zoom { width: 54px; margin-left: 2px; font-size: 12px; }
.style-ic { margin: 0 2px 0 1px; width: 24px; }
.c-style { width: 92px; }
.c-font { width: 112px; margin-left: 2px; }
.c-size { width: 37px; margin-left: 2px; }

.c-markup {
    width: 160px;
    margin-left: 3px;
    padding-left: 1px;
    font-size: 10.6px;
}

.txt-btn {
    flex: none;
    white-space: nowrap;
}

.t-mostrar { margin-left: 4px; width: 37px; }
.pane-chev { margin-left: 6px; }

/* regla */
.workarea {
    height: 570px;
    display: flex;
}

.main-col {
    flex: 1;
    display: flex;
    flex-direction: column;
}

.ruler {
    height: 26px;
    position: relative;
    padding: 5px 2px 0;
    border-top: 2px solid #8f8d80;
}

.ruler-band {
    height: 13px;
    background: linear-gradient(90deg, #aca899 0 12px, #fff 12px 990px, #aca899 990px);
    line-height: 13px;
    font-size: 11.5px;
}

.ruler-nums {
    height: 13px;
    margin-left: 2px;
    padding-left: 28px;
    display: flex;
    background: repeating-linear-gradient(90deg, #222 0 1px, transparent 1px 19.14px) 0 center / 100% 5px no-repeat;
}

.ruler-nums span {
    width: 38.28px;
    flex: none;
    text-align: center;
}

.ruler-tabs {
    height: 4px;
    margin: 1px 0 0 407px;
    width: 585px;
    background: repeating-linear-gradient(90deg, #9a988a 0 1px, transparent 1px 56.55px);
}

.indent-mark {
    position: absolute;
    left: 348px;
    top: 2px;
    width: 10px;
    display: flex;
    flex-direction: column;
}

.indent-mark .top {
    height: 15px;
    background: linear-gradient(135deg, #fff 45%, #000 46% 54%, #fff 55%);
    border: 1px solid #000;
}

.indent-mark .bot {
    height: 7px;
    background-color: #fff;
    border: 1px solid #000;
    border-top: 0;
}

.right-mark {
    position: absolute;
    left: 989px;
    top: 10px;
    width: 10px;
    height: 9px;
}

/* documento */
.doc {
    height: 528px;
    position: relative;
    padding-top: 138px;
    border-left: 2px solid #716f64;
    background-color: #fff;
    font-family: "Liberation Sans", sans-serif;
    font-size: 13.33px;
    letter-spacing: .3px;
    line-height: 16px;
    color: #333;
    overflow: hidden;
}

.para {
    margin: 0;
    white-space: nowrap;
}

.para-locales {
    margin-left: 182px;
    width: 646px;
    text-align: justify;
    text-align-last: justify;
}

.para-prod {
    margin: 242px 0 0 69px;
    width: 855px;
    text-align: justify;
    text-align-last: justify;
}

.para-eje {
    margin: 16px 0 0 69px;
    width: 621px;
    text-align: justify;
    text-align-last: justify;
}

.misspelt {
    text-decoration: underline wavy #e02020 1px;
    text-underline-offset: 2px;
}

.frame-top {
    position: absolute;
    left: 351px;
    top: 0;
    width: 228px;
    height: 106px;
    border: 1px solid #000;
    border-top: 0;
}

.pie-top {
    position: absolute;
    left: 79px;
    top: 0;
    width: 130px;
    height: 34px;
}

.pie-top-label {
    position: absolute;
    left: 129px;
    top: -7px;
    font-size: 9px;
    line-height: 10px;
    color: #243;
}

.frame-mid {
    position: absolute;
    left: 351px;
    top: 170px;
    width: 240px;
    height: 194px;
    padding: 1px 0 0 4px;
    border: 1px solid #000;
    display: flex;
    flex-direction: column;
    font-family: "DejaVu Sans", sans-serif;
    font-weight: bold;
    font-size: 8px;
    letter-spacing: 0;
    line-height: 17px;
    color: #7f93a2;
}

.handle {
    position: absolute;
    left: -1px;
    width: 6px;
    height: 6px;
    background-color: #000;
}

.h1 { top: -1px; }
.h2 { top: 94px; }
.h3 { top: 187px; }

.legend {
    position: absolute;
    left: 103px;
    top: 493px;
    width: 630px;
    height: 32px;
    padding-left: 7px;
    display: flex;
    align-items: center;
    font-family: "DejaVu Sans", sans-serif;
    font-weight: bold;
    font-size: 8.9px;
    letter-spacing: 0;
    color: #4b6070;
    text-shadow: 0 0 1px #8a9aa6;
    white-space: nowrap;
}

.swatch {
    width: 10px;
    height: 14px;
    flex: none;
    box-shadow: 0 0 2px #bbb;
}

.orange { background-color: #ee8c0c; }
.green { background-color: #a9bd52; }

.leg-a { margin: 0 21px 0 9px; }
.leg-b { margin: 0 76px 0 8px; }
.leg-c { margin-right: 14px; }

.leg-input {
    width: 60px;
    height: 21px;
    padding-left: 6px;
    line-height: 17px;
    border: 2px solid #e6e6e6;
    font-size: 7.5px;
}

.leg-cal {
    width: 14px;
    height: 14px;
    margin: 0 46px 0 1px;
    flex: none;
}

.radio {
    width: 14px;
    height: 14px;
    flex: none;
    display: flex;
    align-items: center;
    justify-content: center;
    border-radius: 50%;
    background-color: #f2f2ee;
    box-shadow: 0 0 2px #888;
}

.radio.checked::after {
    content: "";
    width: 4px;
    height: 4px;
    border-radius: 50%;
    background-color: #444;
}

.leg-d { margin: 0 16px 0 6px; font-size: 7.9px; }
.leg-e { margin-left: 4px; font-size: 7.9px; }

/* scrollbars */
.hscroll {
    height: 16px;
    display: flex;
    align-items: stretch;
}

.views {
    width: 67px;
    padding-left: 3px;
    flex: none;
    display: flex;
    align-items: center;
}

.v {
    width: 16px;
    height: 16px;
    flex: none;
    padding: 1px;
}

.v-on {
    background-color: #d6dde8;
    outline: 1px solid #316ac5;
    outline-offset: -1px;
}

.sb-btn {
    width: 15px;
    height: 16px;
    flex: none;
    display: flex;
    align-items: center;
    justify-content: center;
    background-color: #ece9d8;
    border: 1px solid;
    border-color: #fff #716f64 #716f64 #fff;
}

.v-btn {
    width: 16px;
    height: 15px;
}

.hscroll .sb-btn { margin-right: 1px; }

.sb-thumb {
    flex: none;
    background-color: #ece9d8;
    border: 1px solid;
    border-color: #fff #716f64 #716f64 #fff;
}

.hscroll .sb-thumb { width: 769px; }

.sb-track {
    flex: 1;
    background: repeating-conic-gradient(#ece9d8 0 25%, #fff 0 50%) 0 0 / 2px 2px;
}

.arr {
    display: block;
    width: 0;
    height: 0;
    border: 4px solid transparent;
}

.arr.up { border-bottom: 4px solid #000; border-top: 0; }
.arr.down { border-top: 4px solid #000; border-bottom: 0; }
.arr.left { border-right: 4px solid #000; border-left: 0; }
.arr.right { border-left: 4px solid #000; border-right: 0; }

.vscroll {
    width: 18px;
    flex: none;
    padding: 1px 2px 0 0;
    display: flex;
    flex-direction: column;
}

.splitter {
    height: 4px;
    margin-bottom: 2px;
    border: 1px solid;
    border-color: #fff #716f64 #716f64 #fff;
}

.vscroll .sb-track.short {
    flex: none;
    height: 38px;
}

.v-thumb {
    height: 7px;
}

.browse {
    height: 64px;
    padding: 6px 0 0;
    display: flex;
    flex-direction: column;
    align-items: center;
    gap: 7px;
}

.dbl {
    width: 9px;
    height: 9px;
    background: linear-gradient(#000, #000) center / 9px 1px no-repeat;
    position: relative;
}

.dbl::before {
    content: "";
    position: absolute;
    left: 1px;
    border: 3.5px solid transparent;
}

.dbl.up::before { top: -2px; border-bottom: 4px solid #000; border-top: 0; }
.dbl.down::before { top: 6px; border-top: 4px solid #000; border-bottom: 0; }
.dbl.up { background-position: center 0; }
.dbl.down { background-position: center 5px; }

.ball {
    width: 9px;
    height: 9px;
    border-radius: 50%;
    background: radial-gradient(circle at 35% 35%, #ddd, #555);
    border: 1px solid #333;
}

/* barra de dibujo */
.drawbar {
    height: 27px;
    border-top: 1px solid #fff;
    border-bottom: 1px solid #bdbaa8;
}

.t-dibujo { margin-left: 4px; width: 31px; }
.cursor-ic { margin-left: 3px; }
.t-auto { margin-left: 4px; width: 56px; }
.g2 { margin-left: 6px; }

/* barra de estado */
.statusbar {
    height: 24px;
    padding: 2px 0 1px 5px;
    display: flex;
    gap: 5px;
    color: #aca899;
    border-bottom: 1px solid #fff;
}

.st {
    display: flex;
    align-items: center;
    border: 1px solid #e4e1d2;
    padding-left: 5px;
    flex: none;
    white-space: nowrap;
}

.st1 { width: 190px; }
.s-pag { width: 67px; }
.st2 { width: 172px; padding-left: 4px; }
.s-a { width: 62px; }
.s-lin { width: 49px; }
.st3 { width: 26px; padding: 0; justify-content: center; }
.st4 { width: 66px; color: #222; padding-left: 2px; }
.st5 { width: 44px; justify-content: center; }
.st6 { width: 36px; }
.st7 { width: 27px; }

.book {
    width: 24px;
    height: 18px;
}

/* barra de tareas */
.taskbar {
    height: 26px;
    display: flex;
    align-items: center;
    padding-left: 2px;
    font-size: 11.5px;
    color: #000;
}

.start {
    width: 54px;
    height: 22px;
    flex: none;
    display: flex;
    align-items: center;
    gap: 2px;
    font-weight: bold;
    font-size: 12.5px;
    background-color: #ece9d8;
    border: 1px solid;
    border-color: #fff #716f64 #716f64 #fff;
}

.quick {
    width: 74px;
    margin-left: 7px;
    flex: none;
    display: flex;
    gap: 4px;
}

.more {
    width: 13px;
    flex: none;
    font-weight: bold;
    font-size: 13px;
    text-align: left;
}

.task {
    width: 119px;
    height: 22px;
    margin-right: 3.8px;
    padding-left: 2px;
    flex: none;
    display: flex;
    align-items: center;
    gap: 2px;
    white-space: nowrap;
    overflow: hidden;
    border: 1px solid;
    border-color: #fff #716f64 #716f64 #fff;
}

.task.active {
    font-weight: bold;
    background: repeating-conic-gradient(#ece9d8 0 25%, #fff 0 50%) 0 0 / 2px 2px;
    border-color: #716f64 #fff #fff #716f64;
}

.tray {
    width: 130px;
    height: 22px;
    margin-left: 4px;
    padding-left: 5px;
    flex: none;
    display: flex;
    align-items: center;
    border: 1px solid;
    border-color: #aca899 #fff #fff #aca899;
}

.tray .more { width: 12px; }
.clock { margin-left: 4px; font-size: 12px; }

/* ventana del navegador */
.ie {
    position: absolute;
    left: 375px;
    top: 180px;
    width: 243px;
    height: 385px;
    padding: 2px;
    display: flex;
    flex-direction: column;
    background-color: #ece9d8;
    border: 1px solid;
    border-color: #ece9d8 #716f64 #716f64 #ece9d8;
    box-shadow: inset 1px 1px 0 #fff;
}

.ie-title {
    height: 18px;
    flex: none;
    display: flex;
    align-items: center;
    padding: 0 2px 0 1px;
    background: linear-gradient(90deg, #0a5ad0, #3a8cf0);
}

.ie-title .i {
    width: 16px;
    height: 16px;
}

.ie-title-text {
    flex: 1;
    margin-left: 2px;
    font-family: "Noto Sans", sans-serif;
    font-weight: bold;
    font-size: 11.6px;
    color: #fff;
    white-space: nowrap;
    overflow: hidden;
}

.ie-row {
    flex: none;
    display: flex;
    align-items: center;
    position: relative;
    border: 1px solid;
    border-color: #fff #aca899 #aca899 #fff;
}

.ie-menu {
    height: 25px;
    margin-top: 2px;
    padding-left: 8px;
    gap: 15px;
}

.ie-more {
    position: absolute;
    font-weight: bold;
    font-size: 12px;
    line-height: 10px;
    top: 2px;
    right: 5px;
}

.ie-menu .ie-more {
    right: 46px;
}

.ie-logo {
    position: absolute;
    right: 0;
    top: 0;
    bottom: 0;
    width: 39px;
    display: flex;
    align-items: center;
    justify-content: center;
    background-color: #fff;
}

.ie-logo svg {
    width: 20px;
    height: 20px;
}

.ie-tools {
    height: 31px;
    padding-left: 4px;
}

.round {
    width: 23px;
    height: 23px;
    flex: none;
    display: flex;
    align-items: center;
    justify-content: center;
    border-radius: 50%;
    position: relative;
}

.round.back {
    background: radial-gradient(circle at 40% 30%, #8fe07a, #1f8a1f);
    border: 1px solid #1a6a1a;
}

.round.fwd {
    background: radial-gradient(circle at 40% 30%, #e2e2e2, #9a9a9a);
    border: 1px solid #8a8a8a;
}

.round i {
    width: 12px;
    height: 4px;
    background-color: #fff;
    position: relative;
}

.round i::before {
    content: "";
    position: absolute;
    top: -4px;
    border: 6px solid transparent;
}

.back i::before { left: -6px; border-right: 6px solid #fff; border-left: 0; }
.fwd i::before { right: -6px; border-left: 6px solid #fff; border-right: 0; }

.ie-back-text { width: 27px; margin: 0 7px 0 4px; }
.ie-tools .tri { margin-right: 8px; }
.ie-tools .tri.off { margin: 0 9px 0 8px; }

.ie-page {
    width: 19px;
    height: 24px;
    flex: none;
    margin-right: 13px;
}

.ie-addr {
    height: 24px;
    padding-left: 3px;
}

.addr-label {
    width: 44px;
    flex: none;
}

.addr-box {
    width: 59px;
    height: 21px;
    margin-left: 5px;
    display: flex;
    align-items: center;
    background-color: #fff;
    border: 1px solid #716f64;
    font-size: 12px;
}

.addr-drop {
    width: 16px;
    height: 17px;
    margin-left: auto;
    display: flex;
    align-items: center;
    justify-content: center;
    background-color: #ece9d8;
    border: 1px solid;
    border-color: #fff #716f64 #716f64 #fff;
}

.go { margin-left: 7px; }
.ir { width: 8px; margin: 0 21px 0 4px; }
.ie-addr .sep { margin: 0 4px 0 0; }

.ie-view {
    flex: none;
    height: 255px;
    margin-top: 2px;
    border: 2px solid;
    border-color: #8f8d80 #ece9d8 #ece9d8 #8f8d80;
    display: flex;
    flex-direction: column;
    background-color: #ece9d8;
}

.ie-v-row {
    height: 236px;
    display: flex;
}

.ie-content {
    flex: 1;
    padding: 6px 0 0 8px;
    background-color: #fff;
    overflow: hidden;
}

.estimado {
    margin: 0;
    font-family: "DejaVu Sans", sans-serif;
    font-size: 9px;
    letter-spacing: 1.2px;
    line-height: 12px;
    color: #10303c;
}

.pie {
    display: block;
    width: 200px;
    height: 190px;
    margin: 38px 0 0 30px;
    overflow: visible;
}

.slice {
    filter: drop-shadow(4px 4px 2px #000);
}

.pie-t {
    font: 9.3px "DejaVu Sans", sans-serif;
    fill: #10303c;
}

.ie-vs {
    width: 16px;
    flex: none;
    display: flex;
    flex-direction: column;
}

.ie-vs .t1 {
    flex: none;
    height: 87px;
}

.ie-vs .t2 {
    height: 82px;
}

.ie-hs {
    height: 15px;
    margin-right: 16px;
    display: flex;
}

.ie-hs .sb-btn {
    height: 15px;
}

.ie-hs .t3 {
    flex: none;
    width: 93px;
}

.ie-hs .t4 {
    width: 38px;
}

.ie-status {
    height: 19px;
    margin-top: 3px;
    display: flex;
    gap: 3px;
    position: relative;
    font-size: 11.5px;
}

.cell {
    flex: none;
    display: flex;
    align-items: center;
    border: 1px solid;
    border-color: #aca899 #fff #fff #aca899;
}

.c1 { width: 19px; margin-left: 2px; }
.c2 { width: 21px; }
.c3 { width: 21px; }

.zone {
    flex: 1;
    margin-right: 1px;
    gap: 5px;
    padding-left: 1px;
}

.resize {
    position: absolute;
    right: 1px;
    bottom: 1px;
    width: 12px;
    height: 12px;
    background: repeating-linear-gradient(135deg, transparent 0 2px, #aca899 2px 3px, #fff 3px 4px);
    clip-path: polygon(100% 0, 100% 100%, 0 100%);
}
```
